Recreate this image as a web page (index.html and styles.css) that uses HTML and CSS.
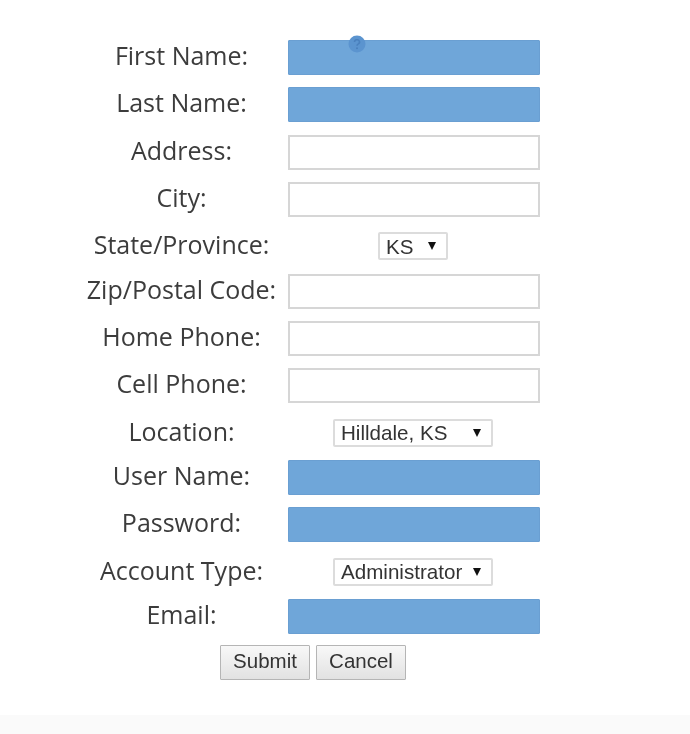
FILE: index.html
```html
<!DOCTYPE html>
<html lang="en">
<head>
    <meta charset="UTF-8">
    <meta name="viewport" content="width=device-width, initial-scale=1.0">
    <title>New Account</title>
    <link rel="stylesheet" href="styles.css">
</head>
<body>
    <form class="account-form">
        <label class="row-label">First Name:</label>
        <div class="field help-field">
            <input type="text" class="text-input required">
            <svg class="help-icon" width="18" height="18" viewBox="0 0 18 18">
                <circle cx="9" cy="9" r="8.5" fill="#5b94cf"/>
                <path d="M6.5 7a2.5 2.3 0 1 1 3.6 2.1c-.8.4-1.1.8-1.1 1.7" fill="none" stroke="#4a80bd" stroke-width="1.6"/>
                <circle cx="9" cy="13.2" r="1" fill="#4a80bd"/>
            </svg>
        </div>

        <label class="row-label">Last Name:</label>
        <div class="field"><input type="text" class="text-input required"></div>

        <label class="row-label">Address:</label>
        <div class="field"><input type="text" class="text-input"></div>

        <label class="row-label">City:</label>
        <div class="field"><input type="text" class="text-input"></div>

        <label class="row-label">State/Province:</label>
        <div class="field select-field">
            <div class="select-box state-box">
                <select class="select-input"><option>KS</option></select>
            </div>
        </div>

        <label class="row-label">Zip/Postal Code:</label>
        <div class="field"><input type="text" class="text-input"></div>

        <label class="row-label">Home Phone:</label>
        <div class="field"><input type="text" class="text-input"></div>

        <label class="row-label">Cell Phone:</label>
        <div class="field"><input type="text" class="text-input"></div>

        <label class="row-label">Location:</label>
        <div class="field select-field">
            <div class="select-box wide-box">
                <select class="select-input"><option>Hilldale, KS</option></select>
            </div>
        </div>

        <label class="row-label">User Name:</label>
        <div class="field"><input type="text" class="text-input required"></div>

        <label class="row-label">Password:</label>
        <div class="field"><input type="password" class="text-input required"></div>

        <label class="row-label">Account Type:</label>
        <div class="field select-field">
            <div class="select-box wide-box">
                <select class="select-input"><option>Administrator</option></select>
            </div>
        </div>

        <label class="row-label">Email:</label>
        <div class="field"><input type="text" class="text-input required"></div>

        <div class="button-row">
            <button type="button" class="btn-1">Submit</button>
            <button type="button" class="btn-1">Cancel</button>
        </div>
    </form>
    <div class="bottom-band"></div>
</body>
</html>
```

FILE: styles.css
```css
*{
    margin: 0;
    padding: 0;
    box-sizing: border-box;
}

html, body{
    height: 100%;
    overflow: hidden;
}

body{
    background: white;
    display: flex;
    flex-direction: column;
    justify-content: space-between;
    filter: blur(0.45px);
}

.account-form{
    width: 540px;
    margin-top: 40px;
    margin-left: 80px;
    display: grid;
    grid-template-columns: 203px 252px;
    column-gap: 5px;
    row-gap: 12.35px;
}

.row-label{
    font-family: "Open Sans", sans-serif;
    font-size: 25px;
    color: #3c3c3c;
    text-align: center;
    line-height: 30px;
    white-space: nowrap;
}

.field{
    height: 35px;
    position: relative;
}

.text-input{
    display: block;
    width: 100%;
    height: 100%;
    background: white;
    border: 2px solid #d6d6d6;
    outline: none;
}

.required{
    background: #6fa6d9;
    border: 1px solid #6a9fd2;
    border-radius: 1px;
}

.help-icon{
    position: absolute;
    left: 60px;
    top: -5px;
}

.select-field{
    height: 32px;
    display: flex;
    justify-content: center;
    align-items: flex-end;
    padding-right: 2px;
    padding-bottom: 1px;
}

.select-box{
    height: 28px;
    position: relative;
}

.select-box::after{
    content: "";
    position: absolute;
    right: 12px;
    top: 10px;
    border-left: 4px solid transparent;
    border-right: 4px solid transparent;
    border-top: 8px solid #111;
}

.state-box{
    width: 70px;
}

.wide-box{
    width: 160px;
}

.select-input{
    appearance: none;
    width: 100%;
    height: 100%;
    background: white;
    border: 2px solid #dcdcdc;
    border-radius: 2px;
    outline: none;
    padding-left: 6px;
    font-family: "Liberation Sans", Arial, sans-serif;
    font-size: 20.6px;
    color: #333;
}

.button-row{
    grid-column: 1 / 3;
    margin-left: 140px;
    margin-top: -1px;
    display: flex;
    gap: 6px;
}

.btn-1{
    width: 90px;
    height: 35px;
    padding-bottom: 3px;
    background: linear-gradient(#f8f8f8, #e2e2e2);
    border: 1px solid #b5b5b5;
    border-radius: 1px;
    font-family: "Liberation Sans", Arial, sans-serif;
    font-size: 20.5px;
    color: #333;
}

.bottom-band{
    height: 19px;
    background: #fafafa;
}
```
